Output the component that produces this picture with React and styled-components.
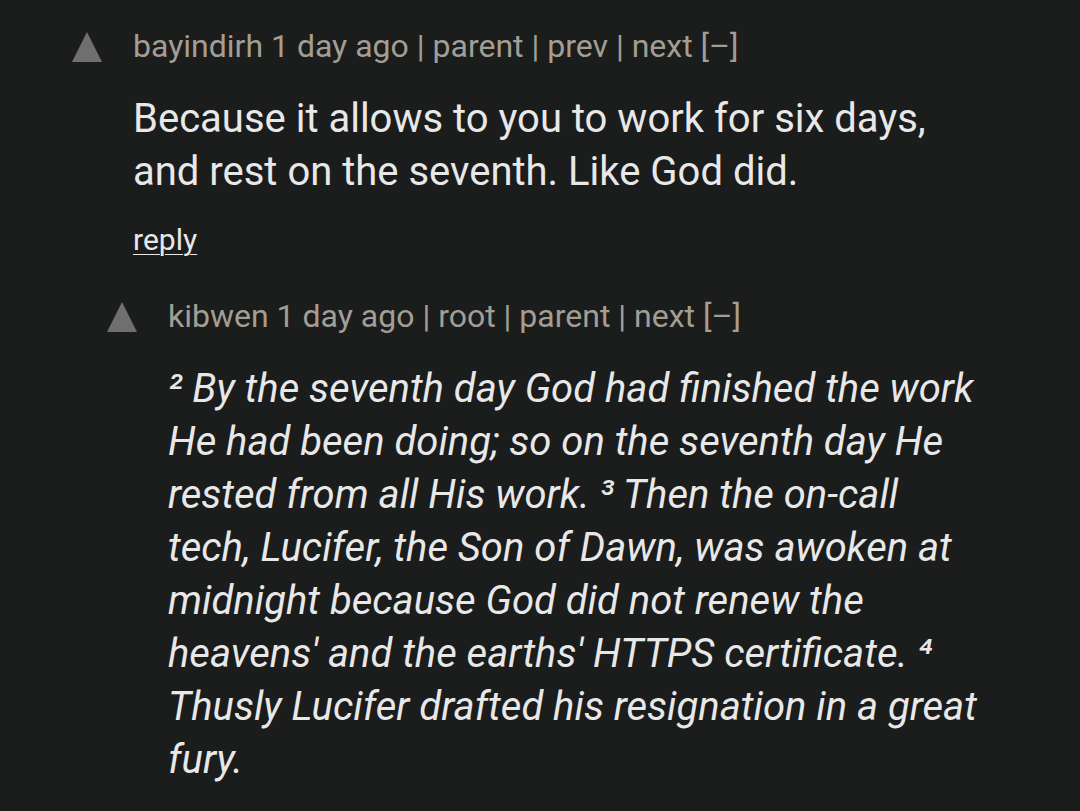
import React from "react";
import styled, { createGlobalStyle } from "styled-components";

const Global = createGlobalStyle`
  html, body { margin: 0; padding: 0; background: #1b1c1c; }
  body { font-family: Roboto, "Noto Sans", "Liberation Sans", sans-serif; }
`;

const Page = styled.div`
  width: 1080px;
  height: 811px;
  box-sizing: border-box;
  background: #1b1c1c;
  padding: 28px 98px 0 72px;
  overflow: hidden;
`;

const Thread = styled.div`
  display: flex;
  flex-direction: column;
  gap: 41px;
`;

const Comment = styled.div`
  display: flex;
  align-items: flex-start;
  gap: 31px;
  margin-left: ${(p) => p.$depth * 35}px;
`;

const Vote = styled.svg`
  flex: none;
  width: 30px;
  height: 30px;
  margin-top: 4px;
  display: block;
`;

const Content = styled.div`
  flex: 1;
  min-width: 0;
  display: flex;
  flex-direction: column;
`;

const Meta = styled.div`
  font-size: 32px;
  line-height: 37px;
  color: #a39e94;
  white-space: nowrap;
`;

const Body = styled.div`
  margin-top: 27px;
  font-size: 40px;
  line-height: 53px;
  color: #e8e8e8;
  font-style: ${(p) => (p.$italic ? "italic" : "normal")};
`;

const Reply = styled.a`
  margin-top: 25px;
  font-size: 30px;
  line-height: 34px;
  color: #e8e8e8;
  text-decoration: underline;
  text-underline-offset: 4px;
  text-decoration-thickness: 1px;
  align-self: flex-start;
`;

const Triangle = () => (
  <Vote viewBox="0 0 30 30">
    <polygon points="15,0 30,30 0,30" fill="#6f6f6f" />
  </Vote>
);

export default function App() {
  return (
    <>
      <Global />
      <Page>
        <Thread>
          <Comment $depth={0}>
            <Triangle />
            <Content>
              <Meta>bayindirh 1 day ago | parent | prev | next [–]</Meta>
              <Body>
                Because it allows to you to work for six days, and rest on the
                seventh. Like God did.
              </Body>
              <Reply>reply</Reply>
            </Content>
          </Comment>
          <Comment $depth={1}>
            <Triangle />
            <Content>
              <Meta>kibwen 1 day ago | root | parent | next [–]</Meta>
              <Body $italic>
                ² By the seventh day God had finished the work He had been
                doing; so on the seventh day He rested from all His work. ³
                Then the on-call tech, Lucifer, the Son of Dawn, was awoken at
                midnight because God did not renew the heavens' and the earths'
                HTTPS certificate. ⁴ Thusly Lucifer drafted his resignation in
                a great fury.
              </Body>
            </Content>
          </Comment>
        </Thread>
      </Page>
    </>
  );
}
